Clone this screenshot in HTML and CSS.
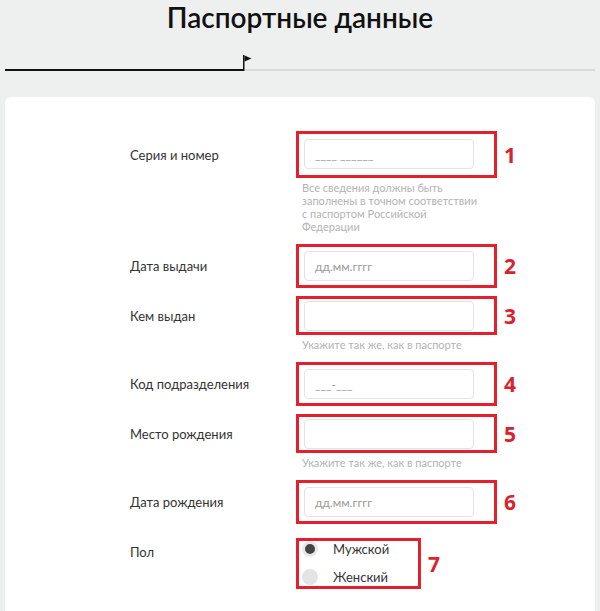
FILE: index.html
```html
<!DOCTYPE html>
<html lang="ru">
<head>
    <meta charset="UTF-8">
    <meta name="viewport" content="width=device-width, initial-scale=1.0">
    <title>Паспортные данные</title>
    <link rel="stylesheet" href="styles.css">
</head>
<body>
    <h1>Паспортные данные</h1>

    <div class="progress">
        <div class="progress-done"></div>
        <svg class="progress-flag" width="10" height="16" viewBox="0 0 10 16">
            <rect x="0" y="0" width="1.5" height="16" fill="#111"/>
            <polygon points="1.5,0.5 8.5,3.5 1.5,6.5" fill="#111"/>
        </svg>
        <div class="progress-rest"></div>
    </div>

    <div class="card">
        <div class="row">
            <div class="label">Серия и номер</div>
            <div class="mark mark-tall"><div class="input"><span class="placeholder">____ ______</span></div></div>
            <div class="num">1</div>
        </div>
        <div class="hint">Все сведения должны быть<br>заполнены в точном соответствии<br>с паспортом Российской<br>Федерации</div>

        <div class="row row-after-hint">
            <div class="label">Дата выдачи</div>
            <div class="mark"><div class="input"><span class="placeholder">дд.мм.гггг</span></div></div>
            <div class="num">2</div>
        </div>
        <div class="row">
            <div class="label">Кем выдан</div>
            <div class="mark mark-short"><div class="input"></div></div>
            <div class="num">3</div>
        </div>
        <div class="hint">Укажите так же, как в паспорте</div>

        <div class="row row-after-hint">
            <div class="label">Код подразделения</div>
            <div class="mark"><div class="input"><span class="placeholder">___-___</span></div></div>
            <div class="num">4</div>
        </div>
        <div class="row">
            <div class="label">Место рождения</div>
            <div class="mark mark-short"><div class="input"></div></div>
            <div class="num">5</div>
        </div>
        <div class="hint">Укажите так же, как в паспорте</div>

        <div class="row row-after-hint">
            <div class="label">Дата рождения</div>
            <div class="mark"><div class="input"><span class="placeholder">дд.мм.гггг</span></div></div>
            <div class="num">6</div>
        </div>

        <div class="row row-gender">
            <div class="label label-top">Пол</div>
            <div class="mark mark-radio">
                <label class="radio"><span class="dot dot-on"></span>Мужской</label>
                <label class="radio"><span class="dot"></span>Женский</label>
            </div>
            <div class="num">7</div>
        </div>
    </div>
</body>
</html>
```

FILE: styles.css
```css
body {
    margin: 0;
    background-color: #eef0f0;
    font-family: Lato, "Noto Sans", sans-serif;
    color: #333;
}

h1 {
    margin: 0;
    text-align: center;
    font-size: 28px;
    line-height: 34px;
    font-weight: 600;
    color: #111;
}

.progress {
    display: flex;
    align-items: flex-end;
    margin: 21px 5px 0;
    height: 16px;
}

.progress-done {
    width: 238px;
    height: 2px;
    background-color: #111;
}

.progress-flag {
    display: block;
    margin-right: -8px;
}

.progress-rest {
    flex: 1;
    height: 2px;
    background-color: #d9dbdb;
}

.card {
    margin: 26px 5px 0;
    padding: 34px 0 40px 125px;
    background-color: #fff;
    border-radius: 6px;
}

.row {
    display: flex;
    align-items: center;
    margin-top: 8px;
}

.row:first-child {
    margin-top: 0;
}

.row-after-hint {
    margin-top: 11px;
}

.label {
    width: 166px;
    font-size: 13px;
}

.label-top {
    align-self: flex-start;
    margin-top: 6px;
}

.mark {
    box-sizing: border-box;
    width: 201px;
    padding: 4px 20px 4px 5px;
    border: 3px solid #e3202b;
}

.mark-tall {
    padding-top: 5px;
    padding-bottom: 6px;
}

.mark-short {
    padding-top: 2px;
    padding-bottom: 1px;
}

.input {
    box-sizing: border-box;
    height: 30px;
    padding-left: 10px;
    border: 1px solid #e4e4e4;
    border-radius: 4px;
    display: flex;
    align-items: center;
}

.placeholder {
    font-size: 12px;
    color: #9a9a9a;
}

.num {
    margin-left: 7px;
    font-family: "Open Sans", sans-serif;
    font-size: 21px;
    font-weight: 700;
    color: #d9232e;
}

.hint {
    margin: 3px 0 0 172px;
    font-size: 11px;
    line-height: 13px;
    color: #b3b3b3;
}

.row-gender {
    margin-top: 14px;
}

.mark-radio {
    display: flex;
    flex-direction: column;
    gap: 12px;
    width: 125px;
    padding: 0 6px 1px 3px;
}

.radio {
    display: flex;
    align-items: center;
    height: 16px;
    font-size: 13px;
}

.dot {
    box-sizing: border-box;
    width: 16px;
    height: 16px;
    margin-right: 15px;
    border-radius: 50%;
    background-color: #e4e4e4;
}

.dot-on {
    background-color: #444;
    border: 3px solid #e8e8e8;
}
```
